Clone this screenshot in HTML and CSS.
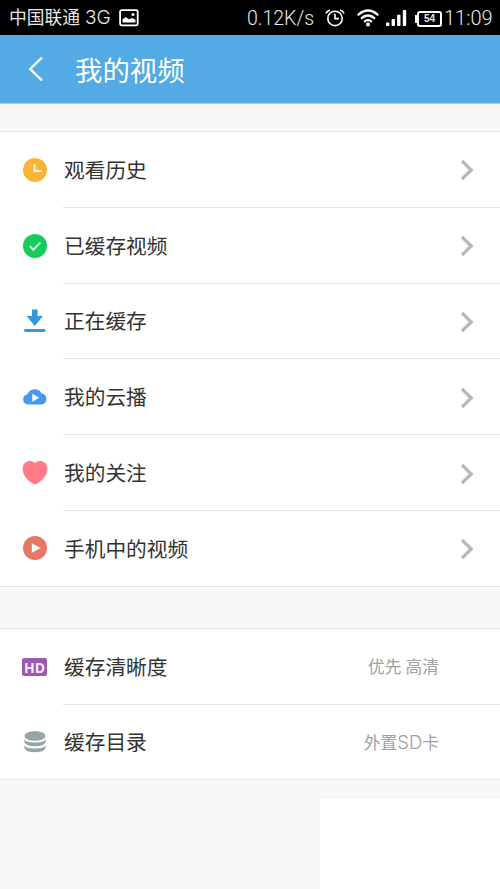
FILE: index.html
```html
<!DOCTYPE html>
<html lang="zh-CN">
<head>
<meta charset="utf-8">
<title>我的视频</title>
<link rel="stylesheet" href="styles.css">
</head>
<body>
<div class="status">
  <span class="carrier">中国联通</span>
  <span class="network">3G</span>
  <svg class="picture" width="20" height="18" viewBox="0 0 20 18"><rect x="1.1" y="1.1" width="17.6" height="15.2" rx="1.5" fill="none" stroke="#fff" stroke-width="1.8"/><path d="M3.5 13.5V10.5L6.5 8L10 10.3L13.5 9L16.5 11V13.5Z" fill="#fff"/><circle cx="14" cy="5.5" r="1.5" fill="#fff"/></svg>
  <span class="speed">0.12K/s</span>
  <svg class="alarm" width="20" height="18" viewBox="0 0 20 18"><g fill="none" stroke="#fff" stroke-width="1.6"><circle cx="10" cy="9.4" r="7.2"/><path d="M10 4.8V9.6H14M1 4.6Q2 1.6 5 1.2M19 4.6Q18 1.6 15 1.2"/></g></svg>
  <svg class="wifi" width="22" height="18" viewBox="0 0 22 18"><g fill="none" stroke="#fff" stroke-width="2.2"><path d="M.8 6.2Q11-3.2 21.2 6.2M4 9.6Q11 3.4 18 9.6M7.2 12.8Q11 9.6 14.8 12.8"/></g><circle cx="11" cy="15.5" r="2" fill="#fff"/></svg>
  <svg class="signal" width="21" height="18" viewBox="0 0 21 18" fill="#fff"><rect x="0" y="13.5" width="3.4" height="3.5" rx="1"/><rect x="5.6" y="10" width="3.4" height="7" rx=".7"/><rect x="11.1" y="5.8" width="3.4" height="11.2" rx=".7"/><rect x="16.8" y="1" width="3.4" height="16" rx=".7"/></svg>
  <span class="battery">54</span>
  <span class="time">11:09</span>
</div>
<header class="bar">
  <svg class="back" width="16" height="26" viewBox="0 0 16 26"><path d="M14 1.5L2.2 13L14 24.5" fill="none" stroke="#fff" stroke-width="2.4"/></svg>
  <h1>我的视频</h1>
</header>
<main>
  <ul class="group">
    <li>
      <svg class="icon" viewBox="0 0 26 26"><circle cx="13" cy="13" r="12" fill="#f9b43a"/><path d="M12.6 7V14H20" fill="none" stroke="#fff3dc" stroke-width="2"/></svg>
      <div class="row"><span class="label">观看历史</span><svg class="chevron" viewBox="0 0 14 22"><path d="M2 2L11.3 11L2 20"/></svg></div>
    </li>
    <li>
      <svg class="icon" viewBox="0 0 26 26"><circle cx="13" cy="13" r="12" fill="#18cc5c"/><path d="M7.8 13.2L11.4 16.7L18.4 9.6" fill="none" stroke="#e4ffed" stroke-width="1.8"/></svg>
      <div class="row"><span class="label">已缓存视频</span><svg class="chevron" viewBox="0 0 14 22"><path d="M2 2L11.3 11L2 20"/></svg></div>
    </li>
    <li>
      <svg class="icon" viewBox="0 0 26 26" fill="#3598db"><path d="M10 1.5H15.6V8H21L12.8 18L4.6 8H10Z"/><rect x="2" y="21" width="21.6" height="3" rx="1.4"/></svg>
      <div class="row"><span class="label">正在缓存</span><svg class="chevron" viewBox="0 0 14 22"><path d="M2 2L11.3 11L2 20"/></svg></div>
    </li>
    <li>
      <svg class="icon" viewBox="0 0 26 26"><path d="M6 20.5A5.2 5.2 0 0 1 5.5 10.2A7.8 7.8 0 0 1 19.6 9.5A5.6 5.6 0 0 1 20 20.5Z" fill="#4898f0"/><path d="M10.3 9.8L17.2 13.8L10.3 17.8Z" fill="#fff"/></svg>
      <div class="row"><span class="label">我的云播</span><svg class="chevron" viewBox="0 0 14 22"><path d="M2 2L11.3 11L2 20"/></svg></div>
    </li>
    <li>
      <svg class="icon" viewBox="0 0 26 26"><path d="M13 24.6C10.5 24 .6 17.8 .6 8.8C.6 .6 9.8-.9 13 3.2C16.2-.9 25.4 .6 25.4 8.8C25.4 17.8 15.5 24 13 24.6Z" fill="#ff7b89"/></svg>
      <div class="row"><span class="label">我的关注</span><svg class="chevron" viewBox="0 0 14 22"><path d="M2 2L11.3 11L2 20"/></svg></div>
    </li>
    <li>
      <svg class="icon" viewBox="0 0 26 26"><circle cx="13" cy="13" r="12" fill="#e87766"/><path d="M9.8 8.2L18.6 13L9.8 17.8Z" fill="#fff"/></svg>
      <div class="row"><span class="label">手机中的视频</span><svg class="chevron" viewBox="0 0 14 22"><path d="M2 2L11.3 11L2 20"/></svg></div>
    </li>
  </ul>
  <ul class="group settings">
    <li>
      <span class="hd">HD</span>
      <div class="row"><span class="label">缓存清晰度</span><span class="value">优先 高清</span></div>
    </li>
    <li>
      <svg class="icon" viewBox="0 0 26 26" fill="#96a5a5"><ellipse cx="13" cy="7" rx="10.6" ry="4.8"/><path d="M2.4 10.3Q4 13.6 13 13.6T23.6 10.3V13Q22 17.3 13 17.3T2.4 13ZM2.4 16.3Q4 19.6 13 19.6T23.6 16.3V19Q22 23.3 13 23.3T2.4 19Z"/></svg>
      <div class="row"><span class="label">缓存目录</span><span class="value">外置<span class="latin">SD</span>卡</span></div>
    </li>
  </ul>
</main>
<div class="panel"></div>
</body>
</html>
```

FILE: styles.css
```css
* { box-sizing: border-box; }
body {
  margin: 0;
  height: 889px;
  display: flex;
  flex-direction: column;
  overflow: hidden;
  background: #f8f8f8;
  color: #333;
  font-family: Roboto, "Noto Sans CJK SC", sans-serif;
}
.status {
  flex: none;
  height: 35px;
  padding-left: 9px;
  display: flex;
  align-items: center;
  background: #000;
  color: #e8e8e8;
  font-size: 18px;
  font-weight: 300;
  line-height: 35px;
  white-space: nowrap;
}
.carrier { width: 72px; font-size: 17.8px; font-weight: 400; }
.network { width: 27px; margin-left: 4px; font: 300 19px/35px Inter, sans-serif; }
.picture { margin-left: 7px; }
.speed { width: 68px; margin: 2px 0 0 108px; font-size: 19.5px; }
.alarm { margin-left: 10px; }
.wifi { margin-left: 12px; }
.signal { margin-left: 7px; }
.battery {
  position: relative;
  width: 25px;
  height: 16px;
  margin: 2px 0 0 10px;
  border: 2px solid #fff;
  border-radius: 3px;
  font: 700 10px/12px "Liberation Sans", sans-serif;
  text-align: center;
}
.battery::before {
  content: "";
  position: absolute;
  left: -4px;
  top: 2px;
  width: 2px;
  height: 8px;
  background: #fff;
}
.time { margin: 2px 0 0 2px; font-size: 20px; }
.bar {
  flex: none;
  height: 69px;
  padding-left: 28px;
  display: flex;
  align-items: center;
  background: #53aae5;
  border-bottom: 1px solid #a9cfe8;
  color: #fff;
}
.bar h1 {
  margin: 6px 0 0 31px;
  font-size: 27.4px;
  font-weight: 400;
  line-height: 40px;
}
.group {
  margin: 27px 0 0;
  padding: 0;
  list-style: none;
  background: #fff;
  border-top: 1px solid #e2e2e2;
  border-bottom: 1px solid #e6e6e6;
}
.settings { margin-top: 41px; }
.group li {
  height: 75.8px;
  padding-left: 21.5px;
  display: flex;
  align-items: center;
}
.group li:last-child { height: 74.8px; }
.icon { width: 26px; height: 26px; flex: none; }
.row {
  flex: 1;
  height: 100%;
  margin-left: 15.5px;
  padding: 0 26px 0 1px;
  display: flex;
  align-items: center;
  justify-content: space-between;
  border-bottom: 1px solid #e4e4e4;
  font-size: 20.7px;
}
.label { margin-bottom: 1px; }
li:last-child .row { border-bottom: 0; }
.chevron { width: 14px; height: 22px; margin-top: 2px; fill: none; stroke: #b8b8b8; stroke-width: 3.2; }
.hd {
  width: 25px;
  height: 18px;
  margin: 1px .5px 0;
  border-radius: 2px;
  background: #9b59b2;
  color: #fbe9ff;
  font: 700 14px/19px "Open Sans", sans-serif;
  text-align: center;
}
.value { margin: 4px 35px 0 0; color: #a0a0a0; font-size: 16.7px; line-height: 24px; }
.latin { font: 300 18.5px/20px Inter, sans-serif; }
.panel {
  position: absolute;
  right: 0;
  bottom: 0;
  width: 180px;
  height: 90px;
  background: #fff;
}
```
